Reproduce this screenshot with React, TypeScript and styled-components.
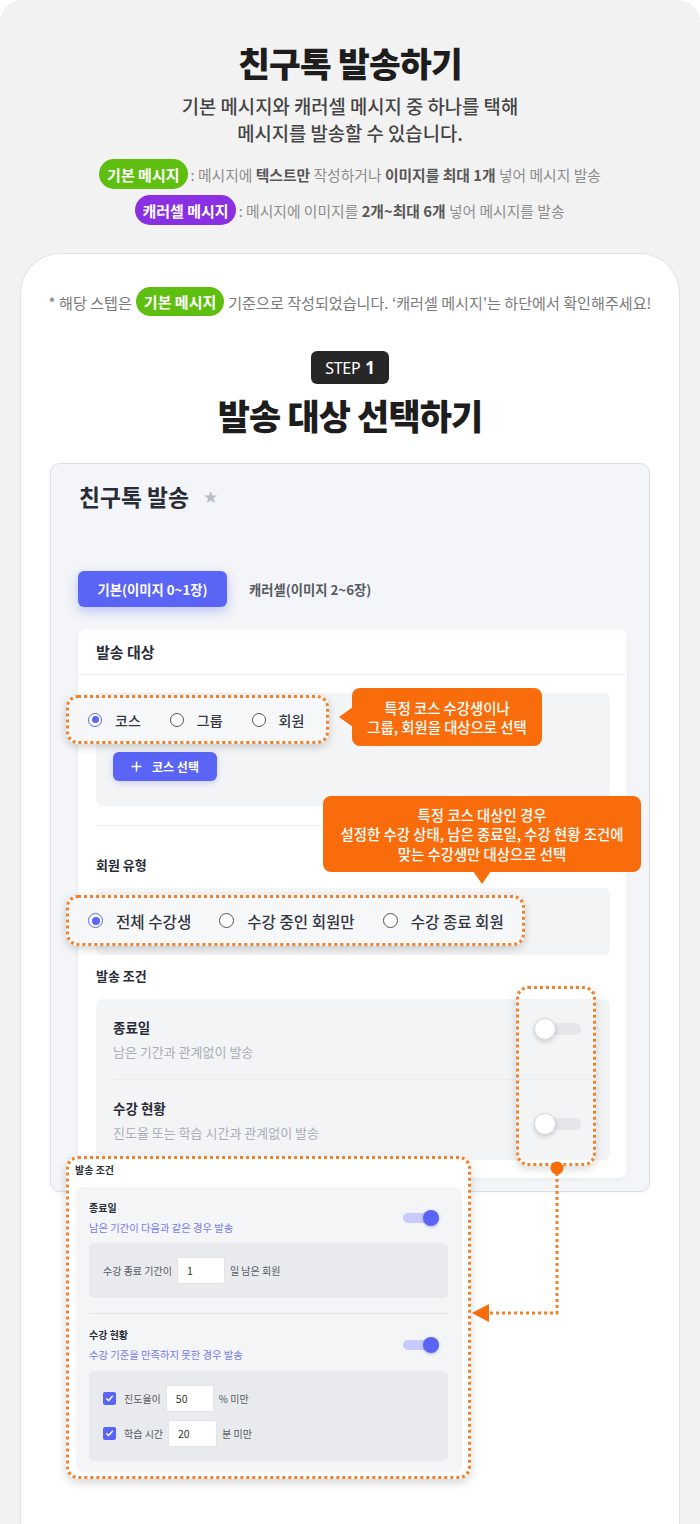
import React from "react";
import styled, { createGlobalStyle, css } from "styled-components";

const ORANGE = "#f96c0b";
const DOTC = "#f0832a";
const INDIGO = "#5a64f5";
const INK = "#272c37";

const GlobalStyle = createGlobalStyle`
  html, body { margin: 0; padding: 0; background: #ffffff; }
  body {
    font-family: "Noto Sans CJK KR", "Noto Sans", sans-serif;
    -webkit-font-smoothing: antialiased;
  }
  * { box-sizing: border-box; }
`;

const Page = styled.div`
  width: 700px;
  height: 1524px;
  overflow: hidden;
  background: #f2f2f2;
  border-radius: 22px 22px 0 0;
  display: flex;
  flex-direction: column;
  align-items: center;
`;

const Hero = styled.header`
  padding-top: 40px;
  display: flex;
  flex-direction: column;
  align-items: center;
`;

const Title = styled.h1`
  margin: 0;
  font-size: 34.5px;
  line-height: 44px;
  font-weight: 800;
  letter-spacing: -0.8px;
  color: #1d1d1d;
`;

const Lead = styled.p`
  margin: 8px 0 0;
  font-size: 18.8px;
  line-height: 27px;
  font-weight: 500;
  color: #454545;
  text-align: center;
`;

const Legend = styled.div`
  margin-top: 13px;
  display: flex;
  flex-direction: column;
  align-items: center;
  gap: 6px;
`;

const LegendRow = styled.div`
  display: flex;
  align-items: center;
  gap: 3px;
`;

const Pill = styled.span<{ $tone: "green" | "purple"; $h?: number }>`
  display: inline-flex;
  align-items: center;
  height: ${(p) => p.$h ?? 30}px;
  padding: 0 ${(p) => (p.$tone === "green" ? 8 : 7)}px;
  border-radius: 15px;
  background: ${(p) => (p.$tone === "green" ? "#5fbf10" : "#8a30e2")};
  color: #fff;
  font-size: 15px;
  font-weight: 700;
  white-space: nowrap;
`;

const LegendText = styled.span`
  font-size: 14.8px;
  color: #8d8d8d;
  white-space: nowrap;
`;

const Strong = styled.b`
  color: #575757;
  font-weight: 700;
`;

const Card = styled.section`
  align-self: stretch;
  flex: 1;
  margin: 28px 20px 0;
  background: #ffffff;
  border: 1px solid #e2e2e2;
  border-bottom: none;
  border-radius: 40px 40px 0 0;
  padding: 33px 29px 0;
  display: flex;
  flex-direction: column;
  align-items: center;
`;

const Note = styled.p`
  margin: 0;
  height: 29px;
  display: flex;
  align-items: center;
  font-size: 15.1px;
  color: #7a7a7a;
  white-space: nowrap;
`;

const NotePill = styled(Pill)`
  margin: 0 4px;
`;

const StepBadge = styled.div`
  margin-top: 35px;
  height: 33px;
  padding: 0 14px;
  border-radius: 6px;
  background: #272727;
  color: #fff;
  display: flex;
  align-items: center;
  gap: 5px;
  font-family: "Noto Sans", sans-serif;
  font-size: 16px;
  font-weight: 400;
  letter-spacing: -0.3px;
`;

const StepNum = styled.strong`
  font-size: 17px;
  font-weight: 700;
`;

const StepTitle = styled.h2`
  margin: 9px 0 0;
  font-size: 35px;
  line-height: 44px;
  font-weight: 800;
  letter-spacing: -0.9px;
  color: #1d1d1d;
`;

const Stage = styled.div`
  position: relative;
  margin-top: 26px;
  width: 600px;
`;

const MockWindow = styled.div`
  background: #f3f5f8;
  border: 1px solid #dcdfe5;
  border-radius: 10px;
  padding: 0 22px 13px 27px;
  box-shadow: 0 1px 4px rgba(30, 40, 60, 0.05);
`;

const MockTitle = styled.div`
  padding-top: 18px;
  margin-left: 1px;
  display: flex;
  align-items: center;
  gap: 14px;
  font-size: 22.8px;
  line-height: 30px;
  font-weight: 700;
  color: ${INK};
`;

const Star = styled.span`
  font-family: "DejaVu Sans", sans-serif;
  font-size: 17px;
  color: #b9bdc6;
`;

const Tabs = styled.div`
  margin-top: 59px;
  display: flex;
  align-items: center;
  gap: 22px;
`;

const Tab = styled.div<{ $active?: boolean }>`
  height: 36px;
  display: flex;
  align-items: center;
  justify-content: center;
  font-size: 13.3px;
  font-weight: 700;
  ${(p) =>
    p.$active
      ? css`
          width: 149px;
          border-radius: 6px;
          background: ${INDIGO};
          color: #fff;
          box-shadow: 0 4px 12px rgba(90, 100, 245, 0.35);
        `
      : css`
          color: #555a63;
        `}
`;

const Panel = styled.div`
  margin-top: 22px;
  background: #fff;
  border-radius: 8px;
  box-shadow: 0 1px 4px rgba(20, 30, 60, 0.06);
`;

const PanelHeader = styled.div`
  height: 46px;
  padding-left: 18px;
  display: flex;
  align-items: center;
  font-size: 15px;
  font-weight: 700;
  color: ${INK};
  border-bottom: 1px solid #eceef1;
`;

const PanelBody = styled.div`
  position: relative;
  padding: 18px 17px 18px 18px;
`;

const GrayBox = styled.div<{ $pad: string }>`
  position: relative;
  background: #f3f4f6;
  border-radius: 6px;
  padding: ${(p) => p.$pad};
`;

const Highlight = styled.div<{ $h: number; $pad: string; $gap: number }>`
  position: relative;
  z-index: 2;
  width: fit-content;
  height: ${(p) => p.$h}px;
  margin-left: -30px;
  padding: ${(p) => p.$pad};
  display: flex;
  align-items: center;
  gap: ${(p) => p.$gap}px;
  border: 3px dotted ${DOTC};
  border-radius: 12px;
  background: rgba(246, 247, 249, 0.96);
  box-shadow: 0 3px 8px rgba(0, 0, 0, 0.18);
`;

const RadioItem = styled.label<{ $size: number }>`
  display: flex;
  align-items: center;
  gap: 13px;
  font-size: ${(p) => p.$size}px;
  font-weight: 500;
  color: #343842;
  white-space: nowrap;
`;

const RadioCircle = styled.span<{ $on?: boolean; $d: number }>`
  position: relative;
  width: ${(p) => p.$d}px;
  height: ${(p) => p.$d}px;
  border-radius: 50%;
  background: #fff;
  border: 1.5px solid ${(p) => (p.$on ? INDIGO : "#50545c")};
  flex: none;
  ${(p) =>
    p.$on &&
    css`
      &::after {
        content: "";
        position: absolute;
        inset: 2.5px;
        border-radius: 50%;
        background: ${INDIGO};
      }
    `}
`;

const AddButton = styled.div`
  margin: 8px 0 0 17px;
  width: 104px;
  height: 29px;
  border-radius: 6px;
  background: ${INDIGO};
  color: #fff;
  display: flex;
  align-items: center;
  justify-content: center;
  gap: 10px;
  font-size: 12px;
  font-weight: 700;
  box-shadow: 0 2px 6px rgba(90, 100, 245, 0.25);
`;

const Rule = styled.div<{ $inset?: string; $mt?: number }>`
  height: 1px;
  background: #eaecef;
  margin: ${(p) => p.$mt ?? 0}px ${(p) => p.$inset ?? "0"};
  margin-bottom: 0;
`;

const SectionLabel = styled.div<{ $mt: number }>`
  margin-top: ${(p) => p.$mt}px;
  margin-bottom: 14px;
  font-size: 13px;
  line-height: 18px;
  font-weight: 700;
  color: ${INK};
`;

const CondRow = styled.div`
  display: flex;
  justify-content: space-between;
  align-items: flex-start;
  padding: 18px 29px 17px 17px;
`;

const CondTitle = styled.div`
  font-size: 13.5px;
  line-height: 20px;
  font-weight: 700;
  color: ${INK};
`;

const CondSub = styled.div`
  margin-top: 5px;
  font-size: 13px;
  line-height: 20px;
  color: #a9aeb6;
`;

const OffToggle = styled.span<{ $mt: number }>`
  position: relative;
  margin-top: ${(p) => p.$mt}px;
  width: 47px;
  height: 22px;
  flex: none;
  &::before {
    content: "";
    position: absolute;
    left: 2px;
    right: 0;
    top: 5px;
    height: 12px;
    border-radius: 6px;
    background: #e4e6ea;
  }
  &::after {
    content: "";
    position: absolute;
    left: 0;
    top: 0;
    width: 22px;
    height: 22px;
    border-radius: 50%;
    background: #fff;
    border: 1px solid #d3d6db;
    box-shadow: 0 2px 4px rgba(0, 0, 0, 0.15);
    box-sizing: border-box;
  }
`;

const ToggleFrame = styled.div`
  position: absolute;
  z-index: 2;
  left: 420px;
  top: -13px;
  width: 80px;
  height: 180px;
  border: 3px dotted ${DOTC};
  border-radius: 12px;
  box-shadow: 0 3px 8px rgba(0, 0, 0, 0.15);
`;

const Callout = styled.div<{ $arrow: "left" | "down" }>`
  position: absolute;
  z-index: 3;
  background: ${ORANGE};
  color: #fff;
  border-radius: 8px;
  font-size: 14.4px;
  line-height: 19.5px;
  font-weight: 500;
  text-align: center;
  display: flex;
  align-items: center;
  justify-content: center;
  white-space: nowrap;
  &::before {
    content: "";
    position: absolute;
    ${(p) =>
      p.$arrow === "left"
        ? css`
            left: -13px;
            top: 50%;
            margin-top: -10px;
            border-top: 10px solid transparent;
            border-bottom: 10px solid transparent;
            border-right: 14px solid ${ORANGE};
          `
        : css`
            bottom: -12px;
            left: 50%;
            margin-left: -9px;
            border-left: 9px solid transparent;
            border-right: 9px solid transparent;
            border-top: 13px solid ${ORANGE};
          `}
  }
`;

const CourseCallout = styled(Callout)`
  left: 256px;
  top: -5px;
  width: 190px;
  height: 58px;
`;

const MemberCallout = styled(Callout)`
  left: 245px;
  top: 121px;
  width: 318px;
  height: 76px;
`;

const Connector = styled.svg`
  position: absolute;
  left: 0;
  top: 0;
  z-index: 4;
  overflow: visible;
  pointer-events: none;
`;

/* ---------- detail popup ---------- */

const Popup = styled.div`
  position: absolute;
  z-index: 5;
  left: 16px;
  top: 693px;
  width: 405px;
  height: 323px;
  background: #fff;
  border: 3px dotted ${DOTC};
  border-radius: 12px;
  box-shadow: 0 4px 10px rgba(0, 0, 0, 0.16);
  padding: 4px 6px 4px 7px;
`;

const PopupLabel = styled.div`
  margin-left: -1px;
  font-size: 10px;
  line-height: 14px;
  font-weight: 700;
  color: ${INK};
`;

const PopupInner = styled.div`
  margin-top: 10px;
  background: #f4f5f7;
  border-radius: 6px;
  padding: 13px 14px 11px 13px;
`;

const PopRow = styled.div`
  display: flex;
  justify-content: space-between;
  align-items: center;
`;

const PopTitle = styled.div`
  font-size: 10px;
  line-height: 16px;
  font-weight: 700;
  color: ${INK};
`;

const PopSub = styled.div`
  margin-top: 4px;
  font-size: 10.3px;
  line-height: 16px;
  color: #7479f0;
`;

const OnToggle = styled.span`
  position: relative;
  width: 36px;
  height: 16px;
  margin-right: 9px;
  flex: none;
  &::before {
    content: "";
    position: absolute;
    left: 0;
    width: 27px;
    top: 3px;
    height: 10px;
    border-radius: 5px;
    background: #c7cafb;
  }
  &::after {
    content: "";
    position: absolute;
    right: 0;
    top: 0;
    width: 16px;
    height: 16px;
    border-radius: 50%;
    background: ${INDIGO};
    box-shadow: 0 1px 3px rgba(60, 70, 200, 0.35);
  }
`;

const Well = styled.div<{ $mt: number; $column?: boolean }>`
  margin-top: ${(p) => p.$mt}px;
  background: #e9eaed;
  border-radius: 5px;
  padding: ${(p) => (p.$column ? "14px 14px" : "0 14px")};
  min-height: 55px;
  display: flex;
  flex-direction: ${(p) => (p.$column ? "column" : "row")};
  align-items: ${(p) => (p.$column ? "flex-start" : "center")};
  gap: ${(p) => (p.$column ? 8 : 5)}px;
`;

const WellLine = styled.div`
  display: flex;
  align-items: center;
  gap: 5px;
`;

const WellText = styled.span`
  font-size: 10px;
  color: #555a62;
  white-space: nowrap;
`;

const MiniInput = styled.span<{ $w: number }>`
  width: ${(p) => p.$w}px;
  height: 27px;
  background: #fff;
  border: 1px solid #e3e4e7;
  border-radius: 2px;
  padding-left: 9px;
  display: flex;
  align-items: center;
  font-size: 10.5px;
  color: #333;
`;

const CheckBox = styled.span`
  width: 13px;
  height: 13px;
  border-radius: 2px;
  background: ${INDIGO};
  display: flex;
  align-items: center;
  justify-content: center;
  margin-right: 3px;
`;

const PopRule = styled.div`
  margin-top: 15px;
  height: 1px;
  background: #e2e4e7;
`;

const PopRowSpaced = styled(PopRow)`
  margin-top: 13px;
`;

const Check = () => (
  <CheckBox>
    <svg width="9" height="9" viewBox="0 0 10 10">
      <path d="M1.8 5.2 L4 7.3 L8.3 2.6" fill="none" stroke="#fff" strokeWidth="1.6" strokeLinecap="round" strokeLinejoin="round" />
    </svg>
  </CheckBox>
);

const Plus = () => (
  <svg width="11" height="11" viewBox="0 0 11 11">
    <path d="M5.5 0.5 V10.5 M0.5 5.5 H10.5" stroke="#fff" strokeWidth="1.5" />
  </svg>
);

export default function App() {
  return (
    <>
      <GlobalStyle />
      <Page>
        <Hero>
          <Title>친구톡 발송하기</Title>
          <Lead>
            기본 메시지와 캐러셀 메시지 중 하나를 택해
            <br />
            메시지를 발송할 수 있습니다.
          </Lead>
          <Legend>
            <LegendRow>
              <Pill $tone="green">기본 메시지</Pill>
              <LegendText>
                : 메시지에 <Strong>텍스트만</Strong> 작성하거나 <Strong>이미지를 최대 1개</Strong> 넣어 메시지 발송
              </LegendText>
            </LegendRow>
            <LegendRow>
              <Pill $tone="purple">캐러셀 메시지</Pill>
              <LegendText>
                : 메시지에 이미지를 <Strong>2개~최대 6개</Strong> 넣어 메시지를 발송
              </LegendText>
            </LegendRow>
          </Legend>
        </Hero>

        <Card>
          <Note>
            * 해당 스텝은
            <NotePill $tone="green" $h={29}>
              기본 메시지
            </NotePill>
            기준으로 작성되었습니다. ‘캐러셀 메시지’는 하단에서 확인해주세요!
          </Note>
          <StepBadge>
            STEP<StepNum>1</StepNum>
          </StepBadge>
          <StepTitle>발송 대상 선택하기</StepTitle>

          <Stage>
            <MockWindow>
              <MockTitle>
                친구톡 발송 <Star>★</Star>
              </MockTitle>
              <Tabs>
                <Tab $active>기본(이미지 0~1장)</Tab>
                <Tab>캐러셀(이미지 2~6장)</Tab>
              </Tabs>
              <Panel>
                <PanelHeader>발송 대상</PanelHeader>
                <PanelBody>
                  <GrayBox $pad="2px 0 25px">
                    <Highlight $h={49} $pad="0 22px 0 19px" $gap={29}>
                      <RadioItem $size={14}>
                        <RadioCircle $on $d={14} />
                        코스
                      </RadioItem>
                      <RadioItem $size={14}>
                        <RadioCircle $d={14} />
                        그룹
                      </RadioItem>
                      <RadioItem $size={14}>
                        <RadioCircle $d={14} />
                        회원
                      </RadioItem>
                    </Highlight>
                    <AddButton>
                      <Plus />
                      코스 선택
                    </AddButton>
                    <CourseCallout $arrow="left">
                      특정 코스 수강생이나
                      <br />
                      그룹, 회원을 대상으로 선택
                    </CourseCallout>
                  </GrayBox>

                  <Rule $mt={19} />

                  <SectionLabel $mt={30}>회원 유형</SectionLabel>
                  <GrayBox $pad="7px 0 9px">
                    <Highlight $h={51} $pad="0 18px 0 19px" $gap={28}>
                      <RadioItem $size={15.6}>
                        <RadioCircle $on $d={15} />
                        전체 수강생
                      </RadioItem>
                      <RadioItem $size={15.6}>
                        <RadioCircle $d={15} />
                        수강 중인 회원만
                      </RadioItem>
                      <RadioItem $size={15.6}>
                        <RadioCircle $d={15} />
                        수강 종료 회원
                      </RadioItem>
                    </Highlight>
                  </GrayBox>
                  <MemberCallout $arrow="down">
                    특정 코스 대상인 경우
                    <br />
                    설정한 수강 상태, 남은 종료일, 수강 현황 조건에
                    <br />
                    맞는 수강생만 대상으로 선택
                  </MemberCallout>

                  <SectionLabel $mt={12}>발송 조건</SectionLabel>
                  <GrayBox $pad="0">
                    <CondRow>
                      <div>
                        <CondTitle>종료일</CondTitle>
                        <CondSub>남은 기간과 관계없이 발송</CondSub>
                      </div>
                      <OffToggle $mt={1} />
                    </CondRow>
                    <Rule $inset="15px 0 17px" />
                    <CondRow>
                      <div>
                        <CondTitle>수강 현황</CondTitle>
                        <CondSub>진도율 또는 학습 시간과 관계없이 발송</CondSub>
                      </div>
                      <OffToggle $mt={15} />
                    </CondRow>
                    <ToggleFrame />
                  </GrayBox>
                </PanelBody>
              </Panel>
            </MockWindow>

            <Popup>
              <PopupLabel>발송 조건</PopupLabel>
              <PopupInner>
                <PopRow>
                  <div>
                    <PopTitle>종료일</PopTitle>
                    <PopSub>남은 기간이 다음과 같은 경우 발송</PopSub>
                  </div>
                  <OnToggle />
                </PopRow>
                <Well $mt={7}>
                  <WellText>수강 종료 기간이</WellText>
                  <MiniInput $w={48}>1</MiniInput>
                  <WellText>일 남은 회원</WellText>
                </Well>
                <PopRule />
                <PopRowSpaced>
                  <div>
                    <PopTitle>수강 현황</PopTitle>
                    <PopSub>수강 기준을 만족하지 못한 경우 발송</PopSub>
                  </div>
                  <OnToggle />
                </PopRowSpaced>
                <Well $mt={8} $column>
                  <WellLine>
                    <Check />
                    <WellText>진도율이</WellText>
                    <MiniInput $w={48}>50</MiniInput>
                    <WellText>% 미만</WellText>
                  </WellLine>
                  <WellLine>
                    <Check />
                    <WellText>학습 시간</WellText>
                    <MiniInput $w={49}>20</MiniInput>
                    <WellText>분 미만</WellText>
                  </WellLine>
                </Well>
              </PopupInner>
            </Popup>

            <Connector width="600" height="900" viewBox="0 0 600 900">
              <path d="M507 710 V850 H440" fill="none" stroke={DOTC} strokeWidth="3" strokeDasharray="3 3" />
              <circle cx="507" cy="705" r="6.5" fill={ORANGE} />
              <polygon points="422,850 439,841 439,859" fill={ORANGE} />
            </Connector>
          </Stage>
        </Card>
      </Page>
    </>
  );
}
